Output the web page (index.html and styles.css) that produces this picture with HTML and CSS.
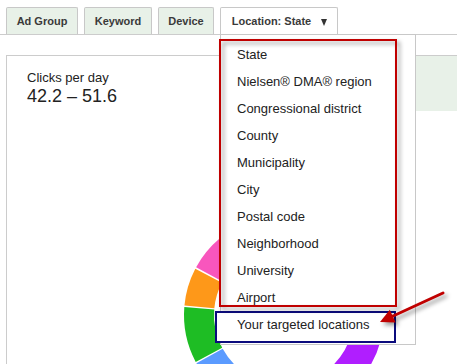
FILE: index.html
```html
<!DOCTYPE html>
<html lang="en">
<head>
<meta charset="utf-8">
<title>Location report</title>
<link rel="stylesheet" href="styles.css">
</head>
<body>
<div class="page">
  <nav class="tabs">
    <div class="tab tab-adgroup">Ad Group</div>
    <div class="tab tab-keyword">Keyword</div>
    <div class="tab tab-device">Device</div>
    <div class="tab tab-location tab-active">Location: State<span class="caret"></span></div>
  </nav>

  <div class="panels">
    <section class="card">
      <div class="card-main">
        <div class="metric-label">Clicks per day</div>
        <div class="metric-value">42.2 – 51.6</div>
        <svg class="donut" width="204" height="204" viewBox="0 0 204 204">
          <g fill="none" stroke-width="30">
            <circle cx="102" cy="102" r="85" stroke="#b01eff" stroke-dasharray="176.5 534.07" transform="rotate(-30 102 102)"/>
            <circle cx="102" cy="102" r="85" stroke="#5b9bff" stroke-dasharray="90.5 534.07" transform="rotate(90 102 102)"/>
            <circle cx="102" cy="102" r="85" stroke="#1ebd24" stroke-dasharray="48.2 534.07" transform="rotate(152 102 102)"/>
            <circle cx="102" cy="102" r="85" stroke="#fe9819" stroke-dasharray="32.6 534.07" transform="rotate(185.5 102 102)"/>
            <circle cx="102" cy="102" r="85" stroke="#f856bd" stroke-dasharray="135.7 534.07" transform="rotate(208.5 102 102)"/>
          </g>
        </svg>
      </div>
      <div class="card-side"></div>
    </section>
  </div>

  <div class="menu">
    <ul class="menu-list">
      <li class="menu-item">State</li>
      <li class="menu-item">Nielsen® DMA® region</li>
      <li class="menu-item">Congressional district</li>
      <li class="menu-item">County</li>
      <li class="menu-item">Municipality</li>
      <li class="menu-item">City</li>
      <li class="menu-item">Postal code</li>
      <li class="menu-item">Neighborhood</li>
      <li class="menu-item">University</li>
      <li class="menu-item">Airport</li>
      <li class="menu-item menu-item-mine">Your targeted locations</li>
    </ul>
  </div>

  <div class="note-box"></div>

  <svg class="arrow" width="80" height="46" viewBox="0 0 80 46">
    <line x1="71" y1="7" x2="20" y2="30.5" stroke="#c00000" stroke-width="3" stroke-linecap="round"/>
    <polygon points="8,36 17.8,23.8 23.6,36.5" fill="#c00000"/>
  </svg>
</div>
</body>
</html>
```

FILE: styles.css
```css
* {
  box-sizing: border-box;
}

html,
body {
  margin: 0;
  padding: 0;
}

body {
  width: 457px;
  height: 364px;
  overflow: hidden;
  background: #fff;
  font-family: "Liberation Sans", Arial, sans-serif;
  color: #222;
}

.page {
  position: relative;
  width: 457px;
  height: 364px;
  overflow: hidden;
}

/* Tabs */
.tabs {
  display: flex;
  align-items: flex-end;
  gap: 6px;
  height: 35px;
  padding: 7px 0 0 6px;
  border-bottom: 1px solid #ccc;
}

.tab {
  height: 27px;
  padding-top: 7px;
  border: 1px solid #c8c8c8;
  border-bottom: 0;
  border-radius: 2px 2px 0 0;
  background: #e8f1e8;
  font-size: 11px;
  font-weight: bold;
  line-height: 13px;
  color: #3a3a3a;
  text-align: center;
  white-space: nowrap;
}

.tab-adgroup {
  width: 72px;
}

.tab-keyword {
  width: 68px;
}

.tab-device {
  width: 56px;
}

.tab-location {
  width: 118px;
  padding-left: 1px;
}

.tab-active {
  background: #fff;
}

.caret {
  display: inline-block;
  width: 0;
  height: 0;
  margin-left: 10px;
  border-left: 3.5px solid transparent;
  border-right: 3.5px solid transparent;
  border-top: 7px solid #333;
  vertical-align: -1px;
}

/* Panels */
.panels {
  padding: 20px 0 0 6px;
}

.card {
  display: flex;
  width: 480px;
  height: 340px;
  border: 1px solid #ccc;
  background: #fff;
}

.card-main {
  flex: 1 1 auto;
  min-width: 0;
  padding: 14px 0 0 20px;
}

.card-side {
  flex: 0 0 160px;
  height: 55px;
  background: #e8f1e8;
}

.metric-label {
  font-size: 13px;
  line-height: 15px;
}

.metric-value {
  margin-top: 1px;
  font-size: 18px;
  line-height: 21px;
}

.donut {
  display: block;
  margin: 106px 0 0 155px;
}

/* Dropdown menu */
.menu {
  position: absolute;
  left: 220px;
  top: 34px;
  width: 196px;
  border: 1px solid #c8c8c8;
  background: #fff;
  padding: 6px 0 1px;
}

.menu-list {
  margin: 0;
  padding: 0;
  list-style: none;
}

.menu-item {
  padding-left: 16px;
  font-size: 13px;
  line-height: 27px;
  color: #222;
  white-space: nowrap;
}

.menu-item-mine {
  margin: 0 19px 0 -6px;
  padding: 0 0 4px 20px;
  border: 2px solid #0b0b7d;
  line-height: 24px;
  background: #fff;
}

/* Annotations */
.note-box {
  position: absolute;
  left: 219px;
  top: 39px;
  width: 178px;
  height: 268px;
  border: 2px solid #c00000;
  filter: drop-shadow(3px 3px 2px rgba(0, 0, 0, 0.4));
}

.arrow {
  position: absolute;
  left: 372px;
  top: 286px;
  filter: drop-shadow(3px 3px 2px rgba(0, 0, 0, 0.4));
}
```
